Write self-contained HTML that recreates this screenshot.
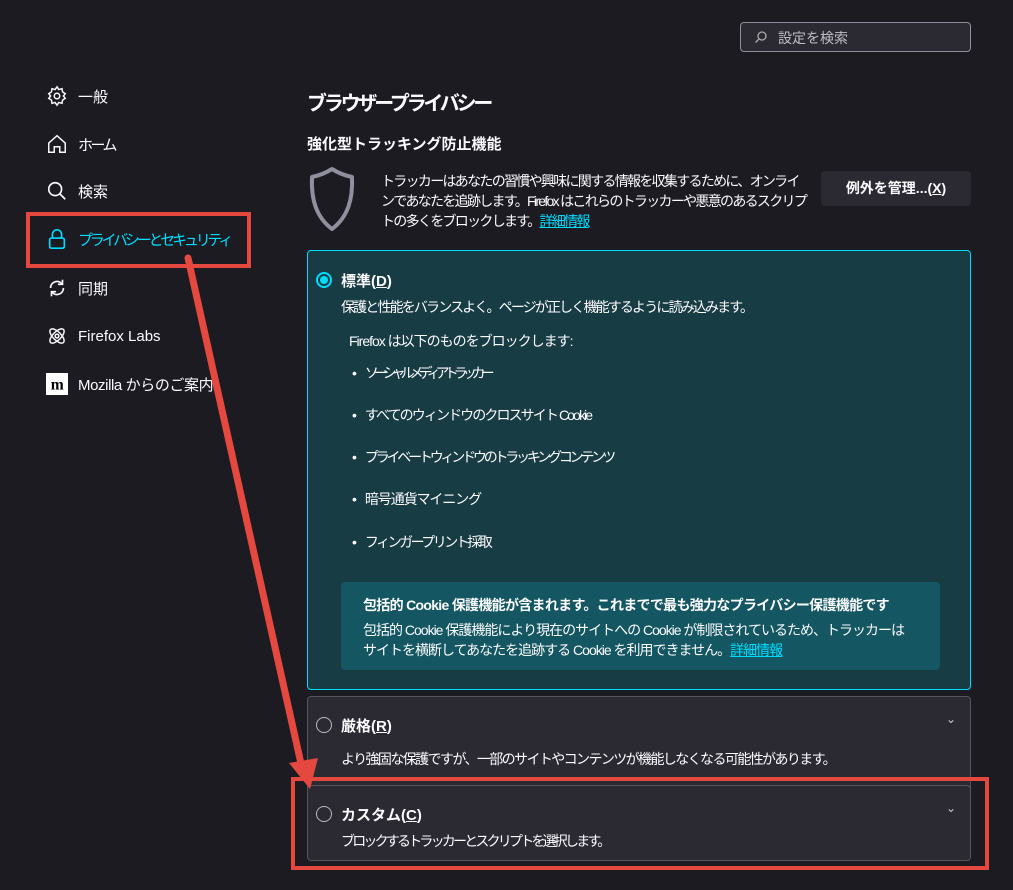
<!DOCTYPE html>
<html><head><meta charset="utf-8"><style>
*{margin:0;padding:0;box-sizing:border-box}
body{width:1013px;height:890px;background:#1c1b22;color:#fbfbfe;font-family:"Liberation Sans","Noto Sans CJK JP",sans-serif;position:relative;overflow:hidden;font-size:14px}
.a{position:absolute;white-space:nowrap}
.nav{position:absolute;left:46px;display:flex;align-items:center;font-size:15px}
.nav svg{width:22px;height:22px;margin-right:10px}
.card{position:absolute;left:307px;width:664px;border-radius:4px}
.radio{position:absolute;width:16px;height:16px;border-radius:50%;border:1.5px solid #bbb}
a{color:#00ddff;text-decoration:underline}
.bl{position:absolute;left:352px;font-size:14px;white-space:nowrap}
.bl:before{content:"•";margin-right:8px;letter-spacing:0}
</style></head><body>
<div class="a" style="left:740px;top:22px;width:231px;height:30px;border:1px solid #8f8f9d;border-radius:4px;background:#2b2a33"></div>
<svg class="a" style="left:754px;top:30px" width="14" height="14" viewBox="0 0 14 14"><circle cx="8" cy="6" r="4" fill="none" stroke="#aaa" stroke-width="1.3"/><path d="M5 9L1.5 12.5" stroke="#aaa" stroke-width="1.3"/></svg>
<div class="a" style="left:778px;top:28px;color:#bfbfc9;font-size:14px">設定を検索</div>

<div class="nav" style="top:85px"><svg viewBox="0 0 24 24" fill="none" stroke="#fbfbfe" stroke-width="1.6"><circle cx="12" cy="12" r="3"/><path d="M12 2l2 3 3.5-1 .5 3.5 3 2-2 2.5 2 2.5-3 2-.5 3.5-3.5-1-2 3-2-3-3.5 1-.5-3.5-3-2 2-2.5-2-2.5 3-2 .5-3.5 3.5 1z"/></svg>一般</div>
<div class="nav" style="top:133px;letter-spacing:-2.5px"><svg viewBox="0 0 24 24" fill="none" stroke="#fbfbfe" stroke-width="1.6"><path d="M3 11L12 3l9 8v10h-6v-6h-6v6H3z"/></svg>ホーム</div>
<div class="nav" style="top:180px"><svg viewBox="0 0 24 24" fill="none" stroke="#fbfbfe" stroke-width="1.8"><circle cx="10" cy="10" r="7"/><path d="M15 15l6 6"/></svg>検索</div>
<div class="nav" style="top:228px;color:#00ddff;letter-spacing:-3.2px"><svg viewBox="0 0 24 24" fill="none" stroke="#00ddff" stroke-width="1.8"><rect x="4" y="11" width="16" height="11" rx="2"/><path d="M7 11V7a5 5 0 0110 0v4"/></svg>プライバシーとセキュリティ</div>
<div class="nav" style="top:277px"><svg viewBox="0 0 24 24" fill="none" stroke="#fbfbfe" stroke-width="1.8"><path d="M5 12a7 7 0 0112-5l1 1M19 12a7 7 0 01-12 5l-1-1"/><path d="M18 3v5h-5M6 21v-5h5"/></svg>同期</div>
<div class="nav" style="top:325px"><svg viewBox="0 0 24 24" fill="none" stroke="#fbfbfe" stroke-width="1.6"><ellipse cx="12" cy="12" rx="10" ry="4.5" transform="rotate(45 12 12)"/><ellipse cx="12" cy="12" rx="10" ry="4.5" transform="rotate(-45 12 12)"/><circle cx="12" cy="12" r="2"/></svg>Firefox Labs</div>
<div class="nav" style="top:373px;letter-spacing:-0.4px"><svg viewBox="0 0 24 24"><rect width="24" height="24" fill="#fff"/><text x="12" y="18" font-size="17" font-weight="bold" text-anchor="middle" fill="#000" font-family="Liberation Serif">m</text></svg>Mozilla からのご案内</div>

<div class="a" style="left:26px;top:212px;width:225px;height:56px;border:4px solid #e5483f"></div>

<div class="a" style="left:307px;top:87px;font-size:20px;font-weight:bold;letter-spacing:-3.2px">ブラウザープライバシー</div>
<div class="a" style="left:307px;top:133px;font-size:15px;font-weight:bold">強化型トラッキング防止機能</div>
<svg class="a" style="left:308px;top:166px" width="48" height="66" viewBox="0 0 48 66"><path d="M24 3C16 8 9 10 4 11c-1 22 4 40 20 52C40 51 45 33 44 11 39 10 32 8 24 3z" fill="none" stroke="#8f8f9d" stroke-width="4" stroke-linejoin="round"/></svg>
<div class="a" style="left:381px;top:171px;font-size:14px;line-height:20px;letter-spacing:-1.7px">トラッカーはあなたの習慣や興味に関する情報を収集するために、オンライ<br>ンであなたを追跡します。Firefox はこれらのトラッカーや悪意のあるスクリプ<br>トの多くをブロックします。<a>詳細情報</a></div>
<div class="a" style="left:821px;top:171px;width:150px;height:35px;background:#2b2a33;border-radius:4px;text-align:center;line-height:35px;font-weight:bold;font-size:14px">例外を管理...(<u>X</u>)</div>

<div class="card" style="top:250px;height:440px;background:#183c44;border:1px solid #00ddff"></div>
<div class="a" style="left:316px;top:272px;width:16px;height:16px;border-radius:50%;border:2px solid #00ddff;background:#183c44"><div style="margin:2px;width:8px;height:8px;border-radius:50%;background:#00ddff"></div></div>
<div class="a" style="left:341px;top:270px;font-size:15px;font-weight:bold">標準(<u>D</u>)</div>
<div class="a" style="left:341px;top:297px;letter-spacing:-1.85px">保護と性能をバランスよく。ページが正しく機能するように読み込みます。</div>
<div class="a" style="left:349px;top:331px;letter-spacing:-1px">Firefox は以下のものをブロックします:</div>
<div class="bl" style="top:363px;letter-spacing:-5px">ソーシャルメディアトラッカー</div>
<div class="bl" style="top:405px;letter-spacing:-1.9px">すべてのウィンドウのクロスサイト Cookie</div>
<div class="bl" style="top:447px;letter-spacing:-3.2px">プライベートウィンドウのトラッキングコンテンツ</div>
<div class="bl" style="top:489px;letter-spacing:-1.1px">暗号通貨マイニング</div>
<div class="bl" style="top:532px;letter-spacing:-2.5px">フィンガープリント採取</div>
<div class="a" style="left:341px;top:582px;width:599px;height:88px;background:#145661;border-radius:4px"></div>
<div class="a" style="left:363px;top:595px;font-weight:bold;letter-spacing:-0.7px">包括的 Cookie 保護機能が含まれます。これまでで最も強力なプライバシー保護機能です</div>
<div class="a" style="left:363px;top:620px;line-height:20px;letter-spacing:-1px">包括的 Cookie 保護機能により現在のサイトへの Cookie が制限されているため、トラッカーは<br>サイトを横断してあなたを追跡する Cookie を利用できません。<a>詳細情報</a></div>

<div class="card" style="top:696px;height:100px;background:#2b2a33;border:1px solid #55545c"></div>
<div class="radio" style="left:316px;top:717px"></div>
<div class="a" style="left:341px;top:715px;font-size:15px;font-weight:bold">厳格(<u>R</u>)</div>
<div class="a" style="left:946px;top:712px;font-size:12px;color:#ccc">⌄</div>
<div class="a" style="left:341px;top:749px;letter-spacing:-1.6px">より強固な保護ですが、一部のサイトやコンテンツが機能しなくなる可能性があります。</div>

<div class="card" style="top:785px;height:76px;background:#2b2a33;border:1px solid #55545c"></div>
<div class="radio" style="left:316px;top:806px"></div>
<div class="a" style="left:341px;top:804px;font-size:15px;font-weight:bold">カスタム(<u>C</u>)</div>
<div class="a" style="left:946px;top:801px;font-size:12px;color:#ccc">⌄</div>
<div class="a" style="left:341px;top:831px;letter-spacing:-2.8px">ブロックするトラッカーとスクリプトを選択します。</div>

<div class="a" style="left:291px;top:777px;width:698px;height:93px;border:4px solid #e5483f"></div>
<svg class="a" style="left:0;top:0" width="1013" height="890"><path d="M188 258L302 768" stroke="#e5483f" stroke-width="7" stroke-linecap="round"/><path d="M289 763L318 758 310 789z" fill="#e5483f"/></svg>
</body></html>
